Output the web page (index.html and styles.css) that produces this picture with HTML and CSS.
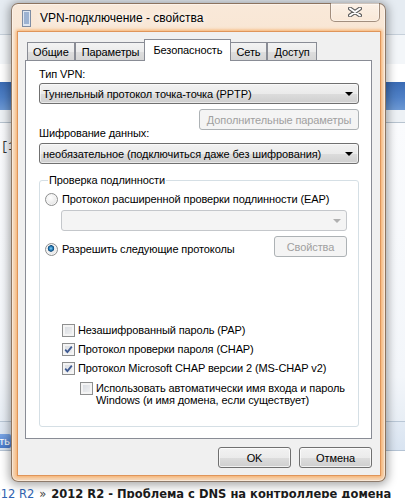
FILE: index.html
```html
<!DOCTYPE html>
<html lang="ru">
<head>
<meta charset="utf-8">
<title>VPN-подключение - свойства</title>
<link rel="stylesheet" href="styles.css">
</head>
<body>
<div class="page">
  <div class="pg-top"></div>
  <div class="pg-sub"></div>
  <div class="pg-gap"></div>
  <div class="pg-nav"></div>
  <div class="pg-subnav"></div>
  <div class="pg-body"><span class="pg-ref">[1]</span></div>
  <div class="pg-bar"><span class="pg-btn">Ответить</span></div>
  <div class="pg-foot"><span class="pg-link">2012 R2</span> <span class="pg-sep">»</span> <b class="pg-title">2012 R2 - Проблема с DNS на контроллере домена</b></div>
</div>

<div class="dialog">
  <div class="titlebar">
    <svg class="app-icon" width="9" height="17" viewBox="0 0 9 17">
      <rect x="0.5" y="0.5" width="8" height="16" fill="#dfe6f0" stroke="#7d8ca3"/>
      <path d="M2 3h5M2 5h5M2 7h5M2 9h5M2 11h5M2 13h5" stroke="#5a7fb2" stroke-width="1"/>
    </svg>
    <span class="title">VPN-подключение - свойства</span>
    <span class="close">
      <svg width="14" height="10" viewBox="0 0 14 10">
        <path d="M2 1.5L12 8.5M12 1.5L2 8.5" stroke="#5b5b5b" stroke-width="4" stroke-linecap="round"/>
        <path d="M2 1.5L12 8.5M12 1.5L2 8.5" stroke="#ffffff" stroke-width="2" stroke-linecap="round"/>
      </svg>
    </span>
  </div>

  <div class="client">
    <div class="tabs">
      <span class="tab">Общие</span>
      <span class="tab">Параметры</span>
      <span class="tab active">Безопасность</span>
      <span class="tab">Сеть</span>
      <span class="tab">Доступ</span>
    </div>

    <div class="panel">
      <div class="label">Тип VPN:</div>
      <div class="combo"><span class="combo-text">Туннельный протокол точка-точка (PPTP)</span><i class="arrow"></i></div>
      <div class="row-end"><span class="btn btn-wide disabled">Дополнительные параметры</span></div>
      <div class="label label-enc">Шифрование данных:</div>
      <div class="combo"><span class="combo-text">необязательное (подключиться даже без шифрования)</span><i class="arrow"></i></div>

      <fieldset class="group">
        <legend>Проверка подлинности</legend>
        <div class="opt"><span class="radio"></span><span>Протокол расширенной проверки подлинности (EAP)</span></div>
        <div class="combo combo-off"><i class="arrow"></i></div>
        <div class="opt-row">
          <div class="opt opt-low"><span class="radio on"></span><span>Разрешить следующие протоколы</span></div>
          <span class="btn disabled">Свойства</span>
        </div>

        <div class="checks">
          <div class="chk"><span class="box"></span><span>Незашифрованный пароль (PAP)</span></div>
          <div class="chk"><span class="box">
            <svg width="9" height="9" viewBox="0 0 9 9"><path d="M1.2 4.6L3.4 7L7.8 1.6" fill="none" stroke="#3e5a92" stroke-width="1.8"/></svg>
          </span><span>Протокол проверки пароля (CHAP)</span></div>
          <div class="chk"><span class="box">
            <svg width="9" height="9" viewBox="0 0 9 9"><path d="M1.2 4.6L3.4 7L7.8 1.6" fill="none" stroke="#3e5a92" stroke-width="1.8"/></svg>
          </span><span>Протокол Microsoft CHAP версии 2 (MS-CHAP v2)</span></div>
          <div class="chk chk-sub"><span class="box"></span><span class="chk-multi">Использовать автоматически имя входа и пароль<br>Windows (и имя домена, если существует)</span></div>
        </div>
      </fieldset>
    </div>

    <div class="actions">
      <span class="btn">OK</span>
      <span class="btn">Отмена</span>
    </div>
  </div>
</div>
</body>
</html>
```

FILE: styles.css
```css
* { box-sizing: border-box; }

html, body {
  margin: 0;
  padding: 0;
}

body {
  width: 405px;
  height: 498px;
  overflow: hidden;
  position: relative;
  background: #ffffff;
  font-family: "Liberation Sans", Arial, sans-serif;
}

/* ---------- web page behind the dialog ---------- */
.page {
  display: flex;
  flex-direction: column;
  height: 498px;
}

.pg-top {
  height: 35px;
  flex: none;
  background: #e6ecf2;
  border-bottom: 1px solid #c6d0da;
}

.pg-sub {
  height: 29px;
  flex: none;
  background: #f3f6f9;
}

.pg-gap {
  height: 18px;
  flex: none;
  background: #ffffff;
}

.pg-nav {
  height: 28px;
  flex: none;
  background: linear-gradient(180deg, #3a6bb4 0%, #4f80c6 55%, #6d99d4 100%);
}

.pg-subnav {
  height: 13px;
  flex: none;
  background: #edf1f5;
  border-bottom: 1px solid #b7c3cf;
}

.pg-body {
  height: 298px;
  flex: none;
  background: linear-gradient(180deg, #fafbfd 0%, #f3f6fa 85%, #e8eef5 100%);
  padding: 13px 0 0 1px;
}

.pg-ref {
  font-family: "Liberation Mono", monospace;
  font-size: 12px;
  color: #333;
}

.pg-bar {
  height: 30px;
  flex: none;
  background: linear-gradient(180deg, #e2eaf4 0%, #d9e4f1 100%);
  border-top: 1px solid #b9c7d6;
  border-bottom: 1px solid #b4c3d4;
  display: flex;
  align-items: flex-end;
  padding-bottom: 2px;
}

.pg-btn {
  width: 62px;
  height: 14px;
  margin-left: -51px;
  background: linear-gradient(180deg, #7aa6e6, #4a7bcc);
  color: #fff;
  font-size: 11px;
  line-height: 14px;
  text-align: right;
  padding-right: 1px;
  border-radius: 2px;
}

.pg-foot {
  flex: 1;
  background: #fff;
  display: flex;
  align-items: flex-end;
  gap: 5px;
  margin-left: -14px;
  margin-bottom: -3px;
  white-space: nowrap;
  font-family: "DejaVu Sans", Verdana, sans-serif;
  font-size: 11.5px;
  line-height: 14px;
}

.pg-link { color: #2f63b0; }
.pg-sep { color: #444; }
.pg-title { color: #1b1b1b; font-weight: bold; }

/* ---------- dialog window ---------- */
.dialog {
  position: absolute;
  left: 11px;
  top: 3px;
  width: 375px;
  height: 479px;
  border: 1px solid rgba(70, 50, 35, 0.6);
  border-radius: 7px;
  background: linear-gradient(180deg, #f9e9d9 0%, #f6dcc2 30%, #f5d5b6 100%);
  box-shadow: inset 0 0 0 1px rgba(255, 255, 255, 0.45),
              0 1px 10px 2px rgba(0, 0, 0, 0.35);
  display: flex;
  flex-direction: column;
  padding: 0 5px 6px 6px;
}

.titlebar {
  height: 28px;
  display: flex;
  align-items: center;
  flex: none;
}

.app-icon {
  margin-left: 4px;
  flex: none;
}

.title {
  margin-left: 9px;
  font-size: 12px;
  color: #000;
  text-shadow: 0 0 6px #fff, 0 0 10px #fff;
}

.close {
  align-self: flex-start;
  margin-top: -1px;
  margin-left: auto;
  width: 50px;
  height: 19px;
  border: 1px solid rgba(90, 65, 45, 0.55);
  border-top: none;
  border-radius: 0 0 5px 5px;
  background: linear-gradient(180deg, rgba(255,255,255,0.35), rgba(255,240,225,0.15));
  box-shadow: inset 0 0 0 1px rgba(255, 255, 255, 0.35);
  display: flex;
  align-items: center;
  justify-content: center;
  padding-bottom: 1px;
}

.client {
  flex: 1;
  background: #f0f0f0;
  padding: 7px 8px 0 7px;
  box-shadow: 0 0 0 1px #df955a, 0 0 3px 2px rgba(248, 165, 85, 0.85);
  font-size: 11px;
  letter-spacing: -0.1px;
  color: #000;
}

/* ---------- tabs ---------- */
.tabs {
  height: 21px;
  display: flex;
  align-items: flex-end;
  padding-left: 2px;
}

.tab {
  height: 18px;
  padding: 0 6px;
  border: 1px solid #898c95;
  border-bottom: none;
  background: linear-gradient(180deg, #f3f3f3 0%, #ebebeb 50%, #dedede 51%, #d6d6d6 100%);
  display: flex;
  align-items: center;
  padding-top: 1px;
}

.tab:first-child {
  padding: 1px 5px 0;
}

.tab.active {
  height: 22px;
  margin: 0 -2px -1px;
  padding: 0 8px 2px;
  background: #ffffff;
  position: relative;
  z-index: 1;
}

/* ---------- tab page ---------- */
.panel {
  height: 379px;
  border: 1px solid #898c95;
  background: #ffffff;
  padding: 6px 12px 0 13px;
}

.label {
  line-height: 15px;
}

.label-enc {
  margin-top: -4px;
}

.combo {
  height: 21px;
  border: 1px solid #707070;
  border-radius: 3px;
  background: linear-gradient(180deg, #f2f2f2 0%, #ebebeb 50%, #dddddd 51%, #cfcfcf 100%);
  box-shadow: inset 0 0 0 1px rgba(255, 255, 255, 0.55);
  display: flex;
  align-items: center;
  padding-left: 3px;
}

.label + .combo {
  margin-top: 1px;
}

.label-enc + .combo {
  margin-top: 2px;
}

.arrow {
  margin-left: auto;
  margin-right: 5px;
  width: 0;
  height: 0;
  border-left: 4px solid transparent;
  border-right: 4px solid transparent;
  border-top: 4px solid #000;
}

.combo-off {
  margin: 3px 0 0 16px;
  border-color: #c4c7cb;
  background: #f4f4f4;
  box-shadow: none;
}

.combo-off .arrow {
  border-top-color: #b0b0b0;
}

.row-end {
  display: flex;
  justify-content: flex-end;
  margin-top: 5px;
}

.btn {
  width: 73px;
  height: 21px;
  border: 1px solid #707070;
  border-radius: 3px;
  background: linear-gradient(180deg, #f2f2f2 0%, #ebebeb 50%, #dddddd 51%, #cfcfcf 100%);
  box-shadow: inset 0 0 0 1px rgba(255, 255, 255, 0.7);
  display: flex;
  align-items: center;
  justify-content: center;
}

.btn.disabled {
  border-color: #adb2b5;
  background: #f4f4f4;
  box-shadow: none;
  color: #a0a0a0;
}

.btn-wide {
  width: 160px;
}

/* ---------- group box ---------- */
.group {
  margin: 9px 0 0;
  padding: 4px 11px 20px 5px;
  border: 1px solid #d5dfe5;
  border-radius: 3px;
  min-width: 0;
}

.group legend {
  margin-left: 3px;
  padding: 0 1px;
  line-height: 15px;
}

.opt {
  display: flex;
  align-items: center;
  gap: 4px;
  line-height: 15px;
}

.opt-row {
  display: flex;
  justify-content: space-between;
  align-items: flex-start;
  margin-top: 5px;
}

.opt-low {
  margin-top: 6px;
}

.radio {
  width: 13px;
  height: 13px;
  flex: none;
  border-radius: 50%;
  border: 1px solid #8e8f8f;
  background: radial-gradient(circle at 40% 35%, #ffffff 0%, #ececec 55%, #d2d2d2 100%);
  box-shadow: inset 0 0 0 1px #f6f6f6;
}

.radio.on {
  background:
    radial-gradient(circle at 45% 40%, #8fd3f6 0, #2c88c4 1.6px, #0e4777 3px, rgba(14, 71, 119, 0) 3.6px),
    radial-gradient(circle at 40% 35%, #ffffff 0%, #ececec 55%, #d2d2d2 100%);
}

.checks {
  margin-top: 66px;
  padding-left: 17px;
  display: flex;
  flex-direction: column;
  gap: 4px;
}

.chk {
  display: flex;
  align-items: center;
  gap: 3px;
  line-height: 15px;
}

.chk-sub {
  margin-top: 2px;
  padding-left: 18px;
  align-items: flex-start;
}

.chk-multi {
  line-height: 12px;
}

.box {
  width: 13px;
  height: 13px;
  flex: none;
  border: 1px solid #8e8f8f;
  padding: 1px;
  display: flex;
  align-items: center;
  justify-content: center;
  box-shadow: inset 0 0 0 2px #f4f4f4;
  background-image: linear-gradient(135deg, #d4d8de 0%, #f4f4f4 100%);
  background-clip: content-box;
}

/* ---------- OK / Cancel ---------- */
.actions {
  display: flex;
  justify-content: flex-end;
  gap: 8px;
  margin-top: 8px;
}
```
